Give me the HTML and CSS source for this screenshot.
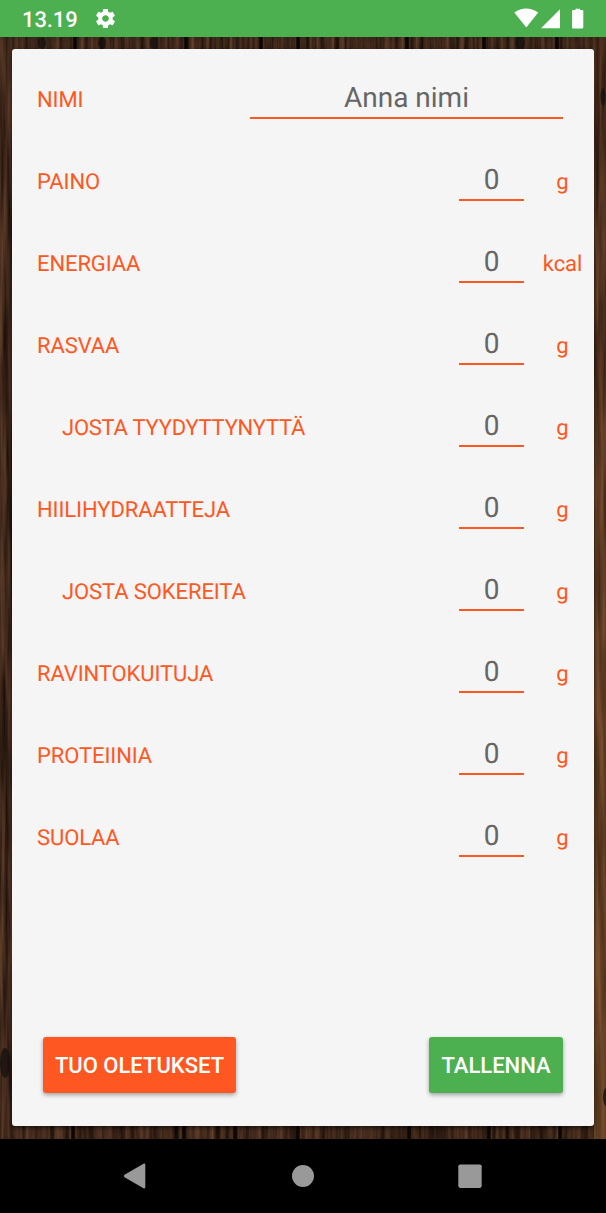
FILE: index.html
```html
<!DOCTYPE html>
<html lang="fi">
<head>
<meta charset="utf-8">
<title>Ruoka</title>
<link rel="stylesheet" href="styles.css">
</head>
<body>
<header class="status">
  <span class="clock">13.19</span>
  <svg class="gear" viewBox="0 0 24 24"><path fill="#fff" d="M19.43 12.98c.04-.32.07-.64.07-.98s-.03-.66-.07-.98l2.11-1.65c.19-.15.24-.42.12-.64l-2-3.46c-.12-.22-.39-.3-.61-.22l-2.49 1c-.52-.4-1.08-.73-1.69-.98l-.38-2.65C14.46 2.18 14.25 2 14 2h-4c-.25 0-.46.18-.49.42l-.38 2.65c-.61.25-1.17.59-1.69.98l-2.49-1c-.23-.09-.49 0-.61.22l-2 3.46c-.13.22-.07.49.12.64l2.11 1.65c-.04.32-.07.65-.07.98s.03.66.07.98l-2.11 1.65c-.19.15-.24.42-.12.64l2 3.46c.12.22.39.3.61.22l2.49-1c.52.4 1.08.73 1.69.98l.38 2.65c.03.24.24.42.49.42h4c.25 0 .46-.18.49-.42l.38-2.65c.61-.25 1.17-.59 1.69-.98l2.49 1c.23.09.49 0 .61-.22l2-3.46c.12-.22.07-.49-.12-.64l-2.11-1.65zM12 15.500c-1.930 0-3.500-1.570-3.500-3.500s1.570-3.500 3.500-3.500 3.500 1.570 3.500 3.500-1.570 3.500-3.500 3.500z"/></svg>
  <svg class="signals" viewBox="0 0 72 22"><g fill="#fff"><path d="M0.300 4.500Q12 -3.500 24.200 4.500L12.300 19.500Z"/><path d="M27 20.300L46 1.300V20.300Z"/><path d="M61.500 2V.8H66V2H68.200Q69.300 2 69.300 3.200V19Q69.300 20.500 68 20.500H59.300Q58 20.500 58 19V3.200Q58 2 59.200 2Z"/></g></svg>
</header>
<main class="screen">
  <svg class="wood" viewBox="0 0 606 1102" preserveAspectRatio="none">
    <defs>
      <filter id="grain" x="0" y="0" width="100%" height="100%" color-interpolation-filters="sRGB">
        <feTurbulence type="fractalNoise" baseFrequency="0.2 0.008" numOctaves="3" seed="7"/>
        <feColorMatrix values="0.5 0 0 0 -0.01  0.34 0 0 0 -0.02  0.24 0 0 0 -0.02  0 0 0 0 1"/>
      </filter>
      <linearGradient id="warm" x1="0" y1="0" x2="0" y2="1">
        <stop offset="0" stop-color="#a0602c" stop-opacity=".1"/>
        <stop offset="1" stop-color="#b0743c" stop-opacity=".4"/>
      </linearGradient>
    </defs>
    <rect width="606" height="1102" filter="url(#grain)"/>
    <rect x="594" width="12" height="1102" fill="url(#warm)"/>
    <path class="seams" d="M75 0V14M186 0V14M261 0V14M298 0V14M407 0V14M484 0V14M557 0V14M73 1086V1102M184 1086V1102M235 1086V1102M298 1086V1102M409 1086V1102M489 1086V1102M560 1086V1102"/>
    <g class="knots"><ellipse cx="42" cy="6" rx="4" ry="6"/><ellipse cx="102" cy="6" rx="4" ry="6"/><ellipse cx="154" cy="6" rx="4" ry="6"/><ellipse cx="520" cy="6" rx="5" ry="8"/><ellipse cx="5" cy="1026" rx="5" ry="15"/><ellipse cx="603" cy="60" rx="2.500" ry="9"/><ellipse cx="606" cy="1060" rx="3" ry="9"/></g>
  </svg>
  <form class="card">
    <div class="row"><label>NIMI</label><span class="field name">Anna nimi</span></div>
    <div class="row"><label>PAINO</label><span class="field">0</span><span class="unit">g</span></div>
    <div class="row"><label>ENERGIAA</label><span class="field">0</span><span class="unit word">kcal</span></div>
    <div class="row"><label>RASVAA</label><span class="field">0</span><span class="unit">g</span></div>
    <div class="row sub"><label class="tight">JOSTA TYYDYTTYNYTTÄ</label><span class="field">0</span><span class="unit">g</span></div>
    <div class="row"><label>HIILIHYDRAATTEJA</label><span class="field">0</span><span class="unit">g</span></div>
    <div class="row sub"><label>JOSTA SOKEREITA</label><span class="field">0</span><span class="unit">g</span></div>
    <div class="row"><label>RAVINTOKUITUJA</label><span class="field">0</span><span class="unit">g</span></div>
    <div class="row"><label>PROTEIINIA</label><span class="field">0</span><span class="unit">g</span></div>
    <div class="row"><label>SUOLAA</label><span class="field">0</span><span class="unit">g</span></div>
    <div class="actions"><button type="button" class="import">TUO OLETUKSET</button><button type="button" class="save">TALLENNA</button></div>
  </form>
</main>
<nav class="navbar">
  <svg viewBox="0 0 606 74"><g fill="#999"><path d="M124.500 35.700L143.500 24.800Q145.300 24 145.300 26V48Q145.300 50 143.500 49.200L124.500 38.200Q123 37 124.500 35.700Z"/><circle cx="303" cy="37" r="11"/><rect x="458.300" y="25.500" width="23.400" height="23.400" rx="1.800"/></g></svg>
</nav>
</body>
</html>
```
FILE: styles.css
```css
* { box-sizing: border-box; }
body { margin: 0; width: 606px; height: 1213px; display: flex; flex-direction: column; overflow: hidden; background: #000; font-family: Roboto, sans-serif; text-rendering: geometricPrecision; }
.status { height: 37px; background: #4caf50; color: #fff; display: flex; align-items: center; padding: 0 22px; }
.clock { font-size: 22px; font-weight: 500; line-height: 26px; width: 72px; padding-top: 4px; letter-spacing: -.1px; }
.gear { width: 23px; height: 23px; }
.signals { width: 72px; height: 22px; margin-left: auto; margin-right: -2px; }
.screen { position: relative; height: 1102px; padding: 12px; background: #2c1a12; }
.wood { position: absolute; inset: 0; width: 606px; height: 1102px; }
.seams { stroke: #0c0605; stroke-width: 3.5; }
.knots { fill: #17120f; opacity: .8; }
.card { position: relative; height: 1077px; margin: 0; padding: 9px 0 33px 25px; display: flex; flex-direction: column; background: #f5f5f5; border-radius: 3px; box-shadow: 0 2px 4px rgba(0, 0, 0, .6); }
.row { height: 82px; display: flex; align-items: center; color: #ff5722; font-size: 22px; }
.row label { flex: 1; padding-top: 2px; white-space: nowrap; letter-spacing: -.1px; }
.row .tight { letter-spacing: -.25px; }
.sub { padding-left: 25px; }
.field { width: 65px; height: 40px; padding-bottom: 1px; margin-right: 7px; display: flex; align-items: center; justify-content: center; border-bottom: 2px solid #ff5722; color: #666; font-size: 28px; }
.name { width: 313px; margin-right: 31px; }
.unit { width: 63px; text-align: center; padding-top: 3px; letter-spacing: -.1px; }
.word { padding-top: 2px; }
.actions { margin-top: auto; padding: 0 31px 0 6px; display: flex; justify-content: space-between; }
.actions button { height: 56px; border: 0; padding: 1px 0 0; border-radius: 3px; color: #fff; font: 500 22px Roboto, sans-serif; box-shadow: 0 2px 4px rgba(0, 0, 0, .35); }
.actions .import { width: 193px; background: #ff5722; }
.actions .save { width: 134px; background: #4caf50; }
.navbar { height: 74px; background: #000; }
.navbar svg { display: block; width: 606px; height: 74px; }
```
